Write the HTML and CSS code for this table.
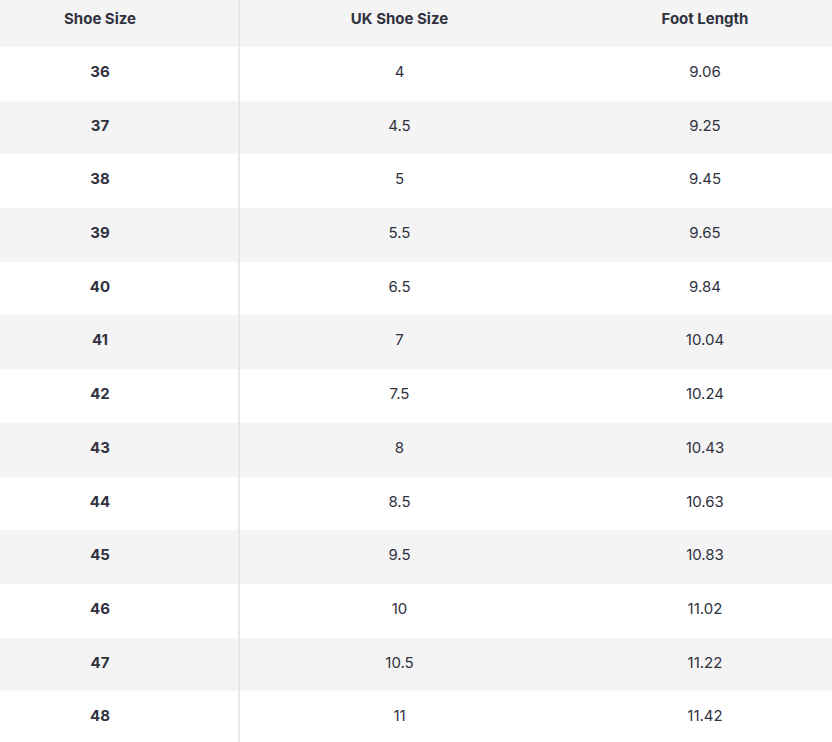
FILE: index.html
```html
<!DOCTYPE html>
<html lang="en">
<head>
<meta charset="utf-8">
<title>Shoe Size Chart</title>
<link rel="stylesheet" href="styles.css">
</head>
<body>
<table class="size-table">
  <colgroup>
    <col class="col-size">
    <col class="col-uk">
    <col class="col-length">
  </colgroup>
  <thead>
    <tr class="head-row">
      <th class="cell cell-size">Shoe Size</th>
      <th class="cell cell-uk">UK Shoe Size</th>
      <th class="cell cell-length">Foot Length</th>
    </tr>
  </thead>
  <tbody>
    <tr class="row"><td class="cell cell-size">36</td><td class="cell cell-uk">4</td><td class="cell cell-length">9.06</td></tr>
    <tr class="row alt"><td class="cell cell-size">37</td><td class="cell cell-uk">4.5</td><td class="cell cell-length">9.25</td></tr>
    <tr class="row"><td class="cell cell-size">38</td><td class="cell cell-uk">5</td><td class="cell cell-length">9.45</td></tr>
    <tr class="row alt"><td class="cell cell-size">39</td><td class="cell cell-uk">5.5</td><td class="cell cell-length">9.65</td></tr>
    <tr class="row"><td class="cell cell-size">40</td><td class="cell cell-uk">6.5</td><td class="cell cell-length">9.84</td></tr>
    <tr class="row alt"><td class="cell cell-size">41</td><td class="cell cell-uk">7</td><td class="cell cell-length">10.04</td></tr>
    <tr class="row"><td class="cell cell-size">42</td><td class="cell cell-uk">7.5</td><td class="cell cell-length">10.24</td></tr>
    <tr class="row alt"><td class="cell cell-size">43</td><td class="cell cell-uk">8</td><td class="cell cell-length">10.43</td></tr>
    <tr class="row"><td class="cell cell-size">44</td><td class="cell cell-uk">8.5</td><td class="cell cell-length">10.63</td></tr>
    <tr class="row alt"><td class="cell cell-size">45</td><td class="cell cell-uk">9.5</td><td class="cell cell-length">10.83</td></tr>
    <tr class="row"><td class="cell cell-size">46</td><td class="cell cell-uk">10</td><td class="cell cell-length">11.02</td></tr>
    <tr class="row alt"><td class="cell cell-size">47</td><td class="cell cell-uk">10.5</td><td class="cell cell-length">11.22</td></tr>
    <tr class="row"><td class="cell cell-size">48</td><td class="cell cell-uk">11</td><td class="cell cell-length">11.42</td></tr>
  </tbody>
</table>
</body>
</html>
```

FILE: styles.css
```css
html, body {
  margin: 0;
  padding: 0;
  background: #ffffff;
}

body {
  font-family: Inter, Lato, "Noto Sans", sans-serif;
  color: #30323f;
  overflow: hidden;
}

.size-table {
  width: 832px;
  border-collapse: collapse;
  table-layout: fixed;
}

.col-size { width: 239px; }
.col-uk { width: 320px; }
.col-length { width: 273px; }

.cell {
  font-size: 15px;
  line-height: 20px;
  text-align: center;
  vertical-align: top;
  padding: 0;
}

.cell-size {
  border-right: 2px solid #e9e9e9;
  padding-right: 38px;
}

.cell-length {
  padding-left: 19px;
}

.head-row {
  height: 47px;
  background: #f4f4f4;
}

.head-row .cell {
  font-weight: 700;
  padding-top: 9px;
}

.row {
  height: 53.7px;
  background: #ffffff;
}

.row.alt {
  background: #f4f4f4;
}

.row .cell {
  padding-top: 15px;
  font-weight: 400;
}

.row .cell-size {
  font-weight: 700;
}
```
